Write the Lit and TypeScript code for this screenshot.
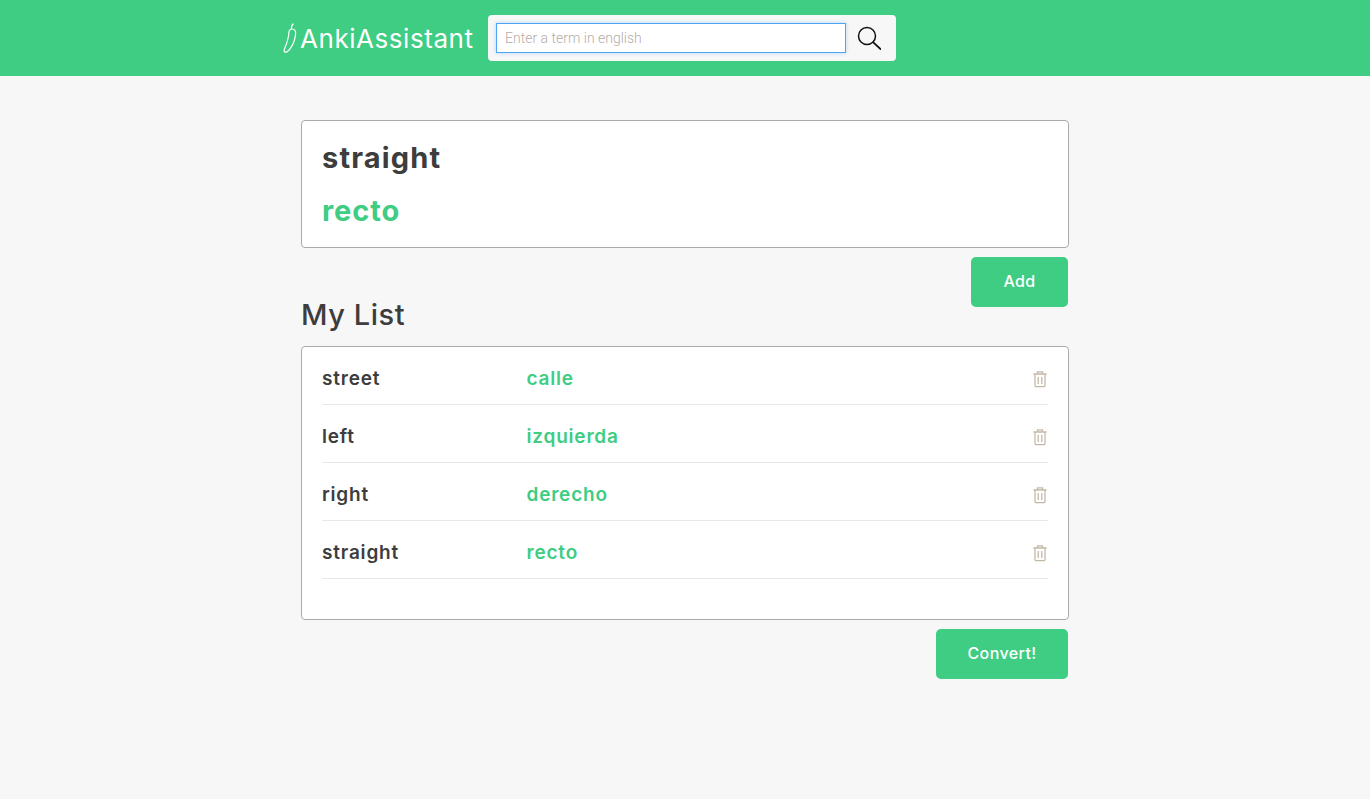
import { LitElement, html, css } from "lit";
import { customElement } from "lit/decorators.js";

const rows = [
  ["street", "calle"],
  ["left", "izquierda"],
  ["right", "derecho"],
  ["straight", "recto"],
];

@customElement("app-root")
export class AppRoot extends LitElement {
  static styles = css`
    :host { display: block; min-height: 799px; background: #f7f7f7; font-family: Inter, "Liberation Sans", sans-serif; color: #3d3d3d; }
    .header { height: 76px; background: #3ecd82; display: flex; align-items: flex-start; padding-left: 283px; box-sizing: border-box; }
    .logo { display: flex; align-items: center; height: 76px; width: 205px; color: #fff; font-size: 26px; letter-spacing: 0.55px; }
    .logo svg { width: 15px; height: 30px; margin-right: 2px; flex: none; }
    .search { margin-top: 15px; width: 408px; height: 46px; background: #f7f7f7; border-radius: 4px; display: flex; align-items: center; padding-left: 8px; box-sizing: border-box; }
    .search input { width: 350px; height: 30px; box-sizing: border-box; border: 1px solid #4da6f5; outline: none; box-shadow: 0 0 4px rgba(77,166,245,.4); background: #fff; padding: 0 8px; font: 300 14px Roboto, sans-serif; color: #333; }
    .search input::placeholder { color: #b5aca8; opacity: 1; }
    .search svg { width: 24px; height: 24px; margin-left: 11px; }
    main { width: 768px; margin-left: 301px; padding-top: 44px; }
    .card { background: #fff; border: 1px solid #aaa; border-radius: 4px; box-sizing: border-box; }
    .term { height: 128px; padding: 0 20px; display: flex; flex-direction: column; }
    .term h2 { margin: 19px 0 0; height: 36px; font-size: 29px; line-height: 36px; font-weight: 700; letter-spacing: 1.15px; }
    .term p { margin: 17px 0 0; height: 36px; font-size: 29px; line-height: 36px; font-weight: 700; color: #3ecd82; letter-spacing: 0.95px; }
    .actions { display: flex; justify-content: flex-end; padding-right: 1px; margin-top: 9px; }
    button { height: 50px; border: 0; border-radius: 5px; background: #3ecd82; color: #fff; font: 500 16px Inter, sans-serif; letter-spacing: 0.4px; padding: 0 0 2px; }
    .add { width: 97px; }
    .convert { width: 132px; }
    h1 { margin: -9px 0 0; height: 48px; font-size: 29px; line-height: 34px; font-weight: 500; letter-spacing: 0.55px; }
    .list { height: 274px; padding: 0 20px; }
    .row { height: 58px; box-sizing: border-box; padding-top: 6px; border-bottom: 1px solid #e8e8e8; display: flex; align-items: center; font-size: 19px; font-weight: 600; letter-spacing: 0.8px; }
    .en { width: 204.5px; }
    .es { color: #3ecd82; flex: 1; }
    .row svg { width: 16px; height: 18px; }
  `;

  render() {
    return html`
      <div class="header">
        <div class="logo">
          <svg viewBox="0 0 15 30" fill="none" stroke="#fff" stroke-width="1.2" stroke-linejoin="round" stroke-linecap="round">
            <path d="M8.6 6C8.2 4 8.8 2.4 10 1M5.9 9.5C6 7.2 7.4 5.8 9.3 6C11.6 6.2 12.8 8 12.6 10.6C12.2 15.5 10.4 21.5 7 25.8C5.3 28 3 29.6 1.8 29C0.8 28.5 1 27 1.7 25.2C3.8 20.5 5.6 15 5.9 9.5Z" />
          </svg>
          AnkiAssistant
        </div>
        <div class="search">
          <input placeholder="Enter a term in english" />
          <svg viewBox="0 0 24 24" fill="none" stroke="#111" stroke-width="1.5" stroke-linecap="round">
            <circle cx="10" cy="10" r="8.5" />
            <path d="M16.3 16.3 23.5 23" stroke-width="1.8" />
          </svg>
        </div>
      </div>
      <main>
        <section class="card term">
          <h2>straight</h2>
          <p>recto</p>
        </section>
        <div class="actions"><button class="add">Add</button></div>
        <h1>My List</h1>
        <section class="card list">
          ${rows.map(([en, es]) => html`
            <div class="row">
              <span class="en">${en}</span>
              <span class="es">${es}</span>
              <svg viewBox="0 0 16 18" fill="none" stroke="#c4b9a8" stroke-width="1.3">
                <path d="M1.5 4H14.5M5.5 4V1.8H10.5V4M3 4V15.5Q3 16.7 4.2 16.7H11.8Q13 16.7 13 15.5V4M6.2 7V14M9.8 7V14" />
              </svg>
            </div>
          `)}
        </section>
        <div class="actions"><button class="convert">Convert!</button></div>
      </main>
    `;
  }
}
